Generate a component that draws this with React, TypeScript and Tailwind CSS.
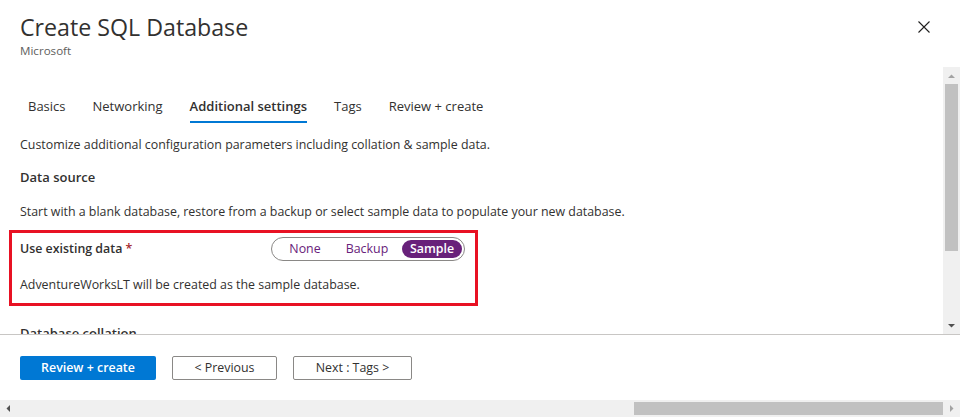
import { useState } from 'react';

const FONT = '"Open Sans", "Noto Sans", "Liberation Sans", sans-serif';

const tabs = ['Basics', 'Networking', 'Additional settings', 'Tags', 'Review + create'];
const sources = ['None', 'Backup', 'Sample'];

/**
 * Create SQL Database blade - Additional settings tab
 */
export default function App() {
  const [source, setSource] = useState('Sample');

  return (
    <div
      className="w-[960px] h-[417px] flex flex-col bg-white text-[#323130] overflow-hidden"
      style={{ fontFamily: FONT }}
    >
      {/* Header */}
      <div className="h-[67px] flex justify-between pl-5 pr-[30px] pt-[11px]">
        <div>
          <h1 className="text-[23.2px] leading-[32px] font-normal text-[#323130]">Create SQL Database</h1>
          <div className="text-[11.6px] leading-[16px] text-[#605e5c]">Microsoft</div>
        </div>
        <button className="mt-[10px] w-[12px] h-[12px] text-[#201f1e]" aria-label="Close">
          <svg viewBox="0 0 12 12" width="12" height="12">
            <path d="M0.5 0.5 L11.5 11.5 M11.5 0.5 L0.5 11.5" stroke="currentColor" strokeWidth="1.1" fill="none" />
          </svg>
        </button>
      </div>

      {/* Scroll area */}
      <div className="h-[267px] flex">
        <div className="flex-1 overflow-hidden pl-5 pr-4">
          {/* Tabs */}
          <div className="flex gap-[27px] pl-[8px] pt-[29px]">
            {tabs.map((t) => (
              <div
                key={t}
                className={`text-[13px] leading-[20px] pb-[5px] border-b-2 ${
                  t === 'Additional settings'
                    ? 'border-[#0078d4] font-semibold text-[#323130]'
                    : 'border-transparent text-[#323130]'
                }`}
              >
                {t}
              </div>
            ))}
          </div>

          <p className="mt-3 text-[12.4px] leading-[20px]">
            Customize additional configuration parameters including collation &amp; sample data.
          </p>
          <h2 className="mt-3 text-[13px] leading-[20px] font-semibold">Data source</h2>
          <p className="mt-[15px] text-[12.4px] leading-[20px]">
            Start with a blank database, restore from a backup or select sample data to populate your new database.
          </p>

          {/* Highlighted option block */}
          <div className="mt-2 -ml-[11px] w-[469px] border-[3px] border-[#e81123] pl-2 pt-1 pb-2">
            <div className="flex items-center">
              <div className="w-[251px] text-[12.4px] leading-[20px] font-semibold">
                Use existing data <span className="text-[#a4262c]">*</span>
              </div>
              <div className="flex items-center h-[24px] w-[194px] border border-[#8a8886] rounded-full px-[2px]">
                {sources.map((s) => (
                  <button
                    key={s}
                    onClick={() => setSource(s)}
                    className={`h-[18px] rounded-full text-[12.4px] leading-[18px] ${
                      s === 'None' ? 'w-[62px]' : s === 'Backup' ? 'w-[62px]' : 'w-[60px] ml-auto'
                    } ${source === s ? 'bg-[#68217a] text-white font-semibold' : 'text-[#68217a]'}`}
                  >
                    {s}
                  </button>
                ))}
              </div>
            </div>
            <p className="mt-[14px] text-[12.4px] leading-[20px]">
              AdventureWorksLT will be created as the sample database.
            </p>
          </div>

          <h2 className="mt-[17px] text-[13px] leading-[20px] font-semibold">Database collation</h2>
        </div>

        {/* Vertical scrollbar */}
        <div className="w-[17px] bg-[#f0f0f0] flex flex-col items-center">
          <svg width="17" height="17" viewBox="0 0 17 17">
            <path d="M5 11 L8.5 7.5 L12 11 Z" fill="#a3a3a3" />
          </svg>
          <div className="w-[13px] h-[167px] bg-[#c1c1c1]" />
          <div className="flex-1" />
          <svg width="17" height="17" viewBox="0 0 17 17">
            <path d="M5 7 L8.5 10.5 L12 7 Z" fill="#505050" />
          </svg>
        </div>
      </div>

      {/* Footer */}
      <div className="h-[66px] border-t border-[#c8c6c4] flex gap-4 pl-5 pt-[21px]">
        <button className="w-[136px] h-[24px] rounded-[2px] bg-[#0078d4] text-white text-[12.4px] font-semibold">
          Review + create
        </button>
        <button className="w-[105px] h-[24px] rounded-[2px] border border-[#8a8886] text-[12.4px] text-[#323130]">
          &lt; Previous
        </button>
        <button className="w-[119px] h-[24px] rounded-[2px] border border-[#8a8886] text-[12.4px] text-[#323130]">
          Next : Tags &gt;
        </button>
      </div>

      {/* Horizontal scrollbar */}
      <div className="h-[17px] bg-[#f0f0f0] flex items-center">
        <svg width="17" height="17" viewBox="0 0 17 17">
          <path d="M10 5 L6.5 8.5 L10 12 Z" fill="#505050" />
        </svg>
        <div className="flex-1" />
        <div className="w-[309px] h-[13px] bg-[#c1c1c1]" />
        <svg width="17" height="17" viewBox="0 0 17 17">
          <path d="M7 5 L10.5 8.5 L7 12 Z" fill="#a3a3a3" />
        </svg>
      </div>
    </div>
  );
}
